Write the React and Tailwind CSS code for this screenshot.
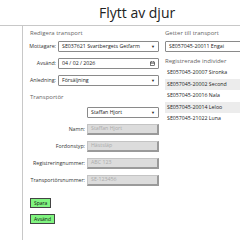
import React from "react";

const individer = [
	"SE057045-20007 Sironka",
	"SE057045-20002 Second",
	"SE057045-20016 Nala",
	"SE057045-20014 Leloo",
	"SE057045-21022 Luna",
];

const Arrow = () => (
	<span className="text-[4px] leading-none text-[#222]">▼</span>
);

const SelectBox = ({ value, width }) => (
	<div
		className={`${width} h-[11px] shrink-0 border border-[#8a8a8a] rounded-[1px] bg-white flex items-center justify-between px-[3px]`}
	>
		<span className="text-[5.25px] leading-none text-[#222] whitespace-nowrap">{value}</span>
		<Arrow />
	</div>
);

const DisabledInput = ({ value }) => (
	<div className="w-[72px] h-[11px] shrink-0 bg-[#dcdcdc] border-t border-l border-[#c4c4c4] border-b-2 border-r-2 border-b-[#9a9a9a] border-r-[#9a9a9a] flex items-center px-[3px]">
		<span className="text-[5.25px] leading-none text-[#ababab] whitespace-nowrap">{value}</span>
	</div>
);

const Row = ({ label, children }) => (
	<div className="h-[17px] flex items-center justify-end gap-[2px]">
		{label && (
			<label className="text-[5.25px] leading-none text-[#333] whitespace-nowrap">{label}</label>
		)}
		{children}
	</div>
);

const App = () => {
	return (
		<div className="w-[240px] h-[240px] overflow-hidden bg-white text-[#333] font-['Open_Sans',sans-serif]">
			<header className="h-[26px] border-b border-[#c8c8c8] flex items-center pl-[99px]">
				<h1 className="text-[14px] leading-none text-[#222] whitespace-nowrap">Flytt av djur</h1>
			</header>
			<div className="flex h-[214px]">
				<aside className="w-[23px] shrink-0 border-r border-[#c8c8c8]" />
				<main className="flex gap-[6px] pl-[7px]">
					<section className="w-[129px] shrink-0 flex flex-col">
						<h2 className="h-[12px] pt-[1px] flex items-center text-[6px] leading-none text-[#666]">
							Redigera transport
						</h2>
						<Row label="Mottagare:">
							<SelectBox value="SE037621 Svartbergets Getfarm" width="w-[101px]" />
						</Row>
						<Row label="Avsänd:">
							<div className="w-[101px] h-[11px] shrink-0 border border-[#8a8a8a] rounded-[1px] bg-white flex items-center justify-between px-[3px]">
								<span className="text-[5.25px] leading-none text-[#222]">04 / 02 / 2026</span>
								<svg width="5" height="5" viewBox="0 0 10 10" fill="none" stroke="#222" strokeWidth="1.2">
									<rect x="1" y="2" width="8" height="7" />
									<line x1="1" y1="4.5" x2="9" y2="4.5" />
									<line x1="3" y1="0.5" x2="3" y2="2.5" />
									<line x1="7" y1="0.5" x2="7" y2="2.5" />
								</svg>
							</div>
						</Row>
						<Row label="Anledning:">
							<SelectBox value="Försäljning" width="w-[101px]" />
						</Row>
						<h2 className="h-[15px] flex items-center text-[6px] leading-none text-[#666]">
							Transportör
						</h2>
						<Row>
							<SelectBox value="Staffan Hjort" width="w-[72px]" />
						</Row>
						<Row label="Namn:">
							<DisabledInput value="Staffan Hjort" />
						</Row>
						<Row label="Fordonstyp:">
							<DisabledInput value="Hästsläp" />
						</Row>
						<Row label="Registreringnummer:">
							<DisabledInput value="ABC 123" />
						</Row>
						<Row label="Transportörsnummer:">
							<DisabledInput value="SE-123456" />
						</Row>
						<div className="mt-[9px] flex flex-col items-start gap-[6px]">
							<button className="h-[10px] px-[3px] bg-[#80f580] border border-[#444] text-[5px] leading-none text-[#111]">
								Spara
							</button>
							<button className="h-[10px] px-[3px] bg-[#80f580] border border-[#444] text-[5px] leading-none text-[#111]">
								Avsänd
							</button>
						</div>
					</section>
					<section className="w-[110px] shrink-0 flex flex-col">
						<h2 className="h-[12px] pt-[1px] flex items-center text-[6px] leading-none text-[#666] whitespace-nowrap">
							Getter till transport
						</h2>
						<div className="h-[17px] flex items-center">
							<div className="w-[110px] h-[11px] shrink-0 border border-[#8a8a8a] rounded-[1px] bg-white flex items-center px-[3px]">
								<span className="text-[5.25px] leading-none text-[#222] whitespace-nowrap">
									SE057045-20011 Engai
								</span>
							</div>
						</div>
						<h2 className="h-[12px] flex items-center text-[6px] leading-none text-[#666] whitespace-nowrap">
							Registrerade individer
						</h2>
						<ul>
							{individer.map((ind, idx) => (
								<li
									key={idx}
									className={`h-[11.5px] flex items-center px-[2px] text-[5.25px] leading-none text-[#222] whitespace-nowrap ${
										idx % 2 === 1 ? "bg-[#ececec]" : "bg-white"
									}`}
								>
									{ind}
								</li>
							))}
						</ul>
					</section>
				</main>
			</div>
		</div>
	);
};

export default App;
